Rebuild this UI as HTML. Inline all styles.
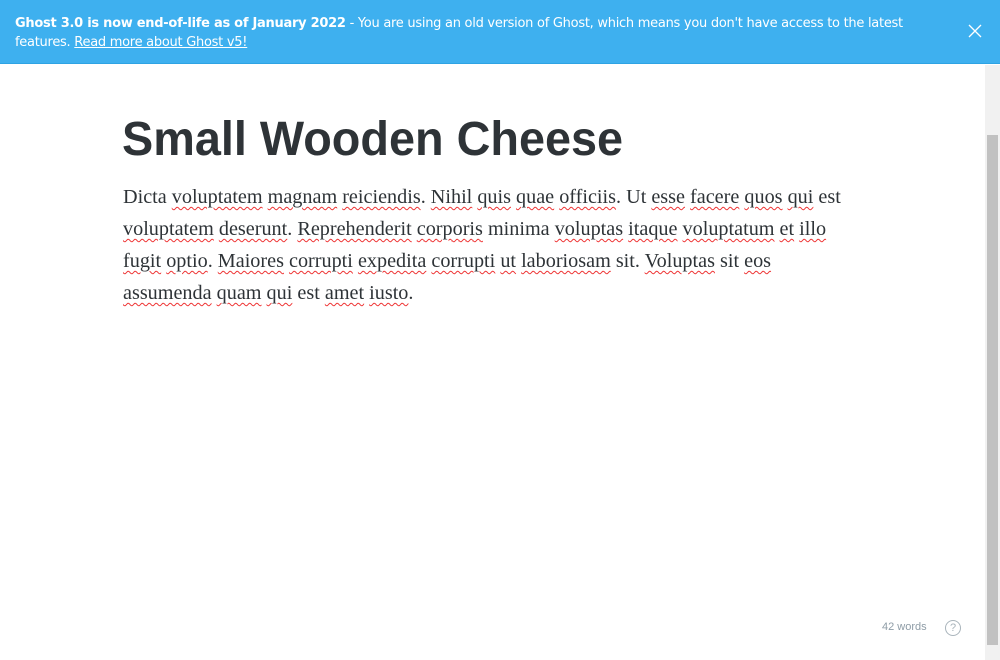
<!DOCTYPE html>
<html><head><style>
body{margin:0;width:1000px;height:660px;overflow:hidden;background:#fff;position:relative;font-family:"Liberation Sans",sans-serif}
.ban{position:absolute;left:0;top:0;width:1000px;height:64px;background:#3eb0ef;border-bottom:1px solid #2ea3e3;color:#fff;font-family:"DejaVu Sans","Liberation Sans",sans-serif;font-size:13px;line-height:19px;box-sizing:border-box;padding:14px 40px 0 15px;letter-spacing:-0.27px}
.ban a{color:#fff;text-decoration:underline}
.x{position:absolute;right:18px;top:24px}
.sb{position:absolute;left:985px;top:65px;width:15px;height:595px;background:#f1f1f1}
.th{position:absolute;left:987px;top:135px;width:11px;height:510px;background:#c1c1c1}
h1{position:absolute;left:122px;top:112px;margin:0;font-size:48px;font-weight:bold;color:#2e3337;letter-spacing:0px;font-family:"Liberation Sans",sans-serif;transform:scaleX(0.975);transform-origin:left}
p{position:absolute;left:123px;top:181px;margin:0;width:760px;font-family:"Liberation Serif",serif;font-size:20.2px;line-height:32px;color:#2e3337}
.u{text-decoration:underline wavy #e33;text-decoration-thickness:1px;text-underline-offset:3px}
.wc{position:absolute;left:882px;top:621px;font-size:11px;color:#8e9ca6}
.q{position:absolute;left:945px;top:620px;width:14px;height:14px;border:1px solid #a9b4bb;border-radius:50%;font-size:11px;color:#a9b4bb;text-align:center;line-height:14px}
</style></head><body>
<div class="ban"><b>Ghost 3.0 is now end-of-life as of January 2022</b> - You are using an old version of Ghost, which means you don't have access to the latest<br>features. <a>Read more about Ghost v5!</a>
<svg class="x" width="14" height="14" viewBox="0 0 14 14"><path d="M1 1L13 13M13 1L1 13" stroke="#fff" stroke-width="1.3"/></svg></div>
<div class="sb"></div><div class="th"></div>
<h1>Small Wooden Cheese</h1>
<p>Dicta <span class="u">voluptatem</span> <span class="u">magnam</span> <span class="u">reiciendis</span>. <span class="u">Nihil</span> <span class="u">quis</span> <span class="u">quae</span> <span class="u">officiis</span>. Ut <span class="u">esse</span> <span class="u">facere</span> <span class="u">quos</span> <span class="u">qui</span> est<br><span class="u">voluptatem</span> <span class="u">deserunt</span>. <span class="u">Reprehenderit</span> <span class="u">corporis</span> minima <span class="u">voluptas</span> <span class="u">itaque</span> <span class="u">voluptatum</span> <span class="u">et</span> <span class="u">illo</span><br><span class="u">fugit</span> <span class="u">optio</span>. <span class="u">Maiores</span> <span class="u">corrupti</span> <span class="u">expedita</span> <span class="u">corrupti</span> <span class="u">ut</span> <span class="u">laboriosam</span> sit. <span class="u">Voluptas</span> sit <span class="u">eos</span><br><span class="u">assumenda</span> <span class="u">quam</span> <span class="u">qui</span> est <span class="u">amet</span> <span class="u">iusto</span>.</p>
<div class="wc">42 words</div>
<div class="q">?</div>
</body></html>
